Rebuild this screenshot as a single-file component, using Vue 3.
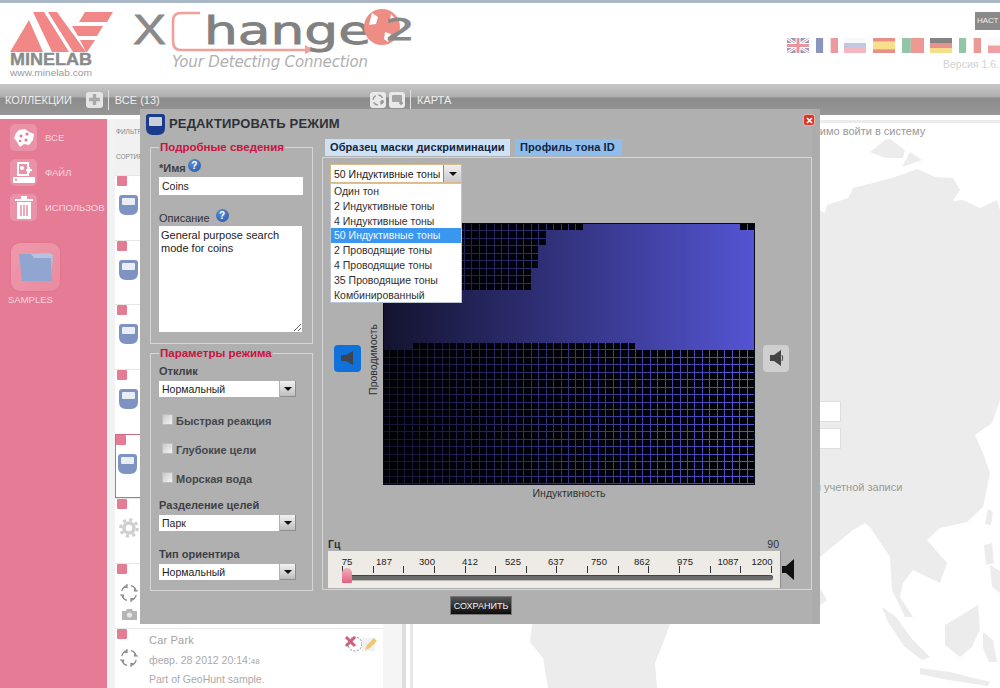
<script setup>
const rows = [
  { kind: 'mode' }, { kind: 'mode' }, { kind: 'mode' }, { kind: 'mode' },
  { kind: 'mode', selected: true }, { kind: 'gear' },
  { kind: 'target', camera: true },
  { kind: 'target', name: 'Car Park', date: 'февр. 28 2012 20:14:', sec: '48', desc: 'Part of GeoHunt sample.' },
]

const flags = [
  { name: 'uk' },
  { dir: 'v', s: [['#3d4f8f', 1], ['#ffffff', 1], ['#e4565f', 1]] },
  { dir: 'h', s: [['#f4f4f8', 1], ['#9aa5d0', 1], ['#e88c96', 1]] },
  { dir: 'h', s: [['#d9453c', 1], ['#f5cb3f', 2], ['#d9453c', 1]] },
  { dir: 'v', s: [['#4fa070', 2], ['#e0574c', 3]] },
  { dir: 'h', s: [['#333333', 1], ['#d84b42', 1], ['#f0c93c', 1]] },
  { dir: 'v', s: [['#4fa070', 1], ['#ffffff', 1], ['#e0574c', 1]] },
  { dir: 'h', s: [['#f6f6f6', 1], ['#e8606a', 1]] },
]
function stripes(f) {
  const total = f.s.reduce((a, b) => a + b[1], 0)
  const len = f.dir === 'v' ? 22 : 15
  let at = 0
  return f.s.map(([c, n]) => {
    const size = (n / total) * len
    const r = f.dir === 'v'
      ? { x: at, y: 0, width: size, height: 15, fill: c }
      : { x: 0, y: at, width: 22, height: size, fill: c }
    at += size
    return r
  })
}

const toneOptions = ['Один тон', '2 Индуктивные тоны', '4 Индуктивные тоны', '50 Индуктивные тоны', '2 Проводящие тоны', '4 Проводящие тоны', '35 Проводящие тоны', 'Комбинированный']
const freq = [75, 187, 300, 412, 525, 637, 750, 862, 975, 1087, 1200]
const ticks = Array.from({ length: 15 }, (_, i) => i)

const COLS = 50, ROWS = 36, CW = 372 / COLS, CH = CW
function isBlack(r, c) {
  if (r === 0) return c < 27 || c >= 48
  if (r <= 2) return c < 22
  if (r <= 5) return c < 21
  if (r <= 8) return c < 20
  if (r <= 15) return false
  if (r === 16) return c >= 4 && c < 34
  return true
}
let d = ''
for (let r = 0; r < ROWS; r++) {
  for (let c = 0; c < COLS; c++) {
    if (isBlack(r, c)) {
      const x = Math.round(c * CW), y = 1 + Math.round(r * CH)
      const w = Math.round((c + 1) * CW) - x - 1, h = 1 + Math.round((r + 1) * CH) - y - 1
      d += `M${x} ${y}h${w}v${h}h${-w}z`
    }
  }
}
const maskPath = d
</script>

<template>
  <div class="page">
    <div class="topline"></div>
    <header class="header">
      <svg class="logo" width="430" height="81" viewBox="0 3 430 81">
        <g fill="#f28787">
          <polygon points="10,52 29,20 43,52" />
          <polygon points="33,12 44,12 69,52 52,52" />
          <polygon points="48,12 57,12 86,52 73,52" />
          <polygon points="85,12 113,12 107,22 79,22" />
          <polygon points="72,26 103,26 97,36 78,36" />
          <polygon points="80,40 95,40 87,52 86,52" />
        </g>
        <text x="10" y="65" class="t-mine" textLength="82" lengthAdjust="spacingAndGlyphs">MINELAB</text>
        <text x="10" y="76" class="t-www" textLength="82" lengthAdjust="spacingAndGlyphs">www.minelab.com</text>
        <text x="133" y="44" class="t-x" textLength="33" lengthAdjust="spacingAndGlyphs">X</text>
        <path d="M200 13H181Q173 13 173 21V41Q173 50 181 50H306" fill="none" stroke="#f0a098" stroke-width="2.6" />
        <polygon points="305,45 314,50 305,54" fill="#f0a098" />
        <text x="204" y="44" class="t-hange" textLength="167" lengthAdjust="spacingAndGlyphs">hange</text>
        <circle cx="382" cy="27" r="18" fill="#ee8d84" />
        <path d="M372 13l6 4-2 7-7 1zM385 32l6 2-3 8-4-3zM391 14l5 6-6 1z" fill="#fff" />
        <text x="385" y="40" class="t-two" textLength="30" lengthAdjust="spacingAndGlyphs">2</text>
        <text x="172" y="67" class="t-tag" textLength="196">Your Detecting Connection</text>
      </svg>
      <div class="head-right">
        <div class="settings">НАСТ</div>
        <div class="flags">
          <svg v-for="(f, i) in flags" :key="i" class="flag" width="22" height="15" viewBox="0 0 22 15">
            <template v-if="f.name === 'uk'">
              <rect width="22" height="15" fill="#4d5a96" />
              <path d="M0 0L22 15M22 0L0 15" stroke="#fff" stroke-width="3" />
              <path d="M0 0L22 15M22 0L0 15" stroke="#d9606c" stroke-width="1" />
              <path d="M11 0V15M0 7.5H22" stroke="#fff" stroke-width="5" />
              <path d="M11 0V15M0 7.5H22" stroke="#d9505c" stroke-width="3" />
            </template>
            <rect v-for="(r, j) in (f.name ? [] : stripes(f))" :key="j" v-bind="r" />
          </svg>
        </div>
        <div class="version">Версия 1.6.</div>
      </div>
    </header>

    <nav class="toolbar">
      <div class="tb-left">
        <span class="tb-text">КОЛЛЕКЦИИ</span>
        <span class="tb-btn plus">
          <svg width="13" height="13" viewBox="0 0 13 13"><path d="M6.5 1v11M1 6.5h11" stroke="#a9a9a9" stroke-width="3.4" /></svg>
        </span>
        <span class="tb-sep"></span>
        <span class="tb-text all">ВСЕ (13)</span>
      </div>
      <span class="tb-btn">
        <svg width="14" height="14" viewBox="0 0 14 14"><circle cx="7" cy="7" r="5" fill="none" stroke="#999" stroke-width="1.5" stroke-dasharray="5 2.8" /><path d="M9 9h4M11 7v4" stroke="#999" stroke-width="1.6" /></svg>
      </span>
      <span class="tb-btn second">
        <svg width="14" height="14" viewBox="0 0 14 14"><rect x="2" y="2" width="10" height="7" rx="1" fill="#a4a4a4" /><path d="M9 10h4M11 8v4" stroke="#999" stroke-width="1.6" /></svg>
      </span>
      <span class="tb-sep map-sep"></span>
      <span class="tb-text all">КАРТА</span>
    </nav>

    <main class="main">
      <aside class="side">
        <div class="side-item">
          <span class="tile">
            <svg width="22" height="20" viewBox="0 0 22 20"><path d="M6 2l6-1 4 3 5 2-1 6-4 5-5-1-4 3-3-5-3-4 2-5z" fill="#fff" /><circle cx="8" cy="8" r="1.6" fill="#e67b96" /><circle cx="14" cy="6" r="1.6" fill="#e67b96" /><circle cx="13" cy="12" r="1.6" fill="#e67b96" /><circle cx="7" cy="13" r="1.2" fill="#e67b96" /></svg>
          </span>
          <span>ВСЕ</span>
        </div>
        <div class="side-item">
          <span class="tile">
            <svg width="24" height="24" viewBox="0 0 24 24"><path d="M6 2h10v12H6z" fill="none" stroke="#fff" stroke-width="2" /><circle cx="10" cy="7" r="2" fill="#fff" /><path d="M14 9h6M17 6v6" stroke="#fff" stroke-width="2" /><rect x="1" y="16" width="22" height="6" rx="1" fill="#fff" /><rect x="3" y="18" width="2" height="1.5" fill="#e67b96" /></svg>
          </span>
          <span>ФАЙЛ</span>
        </div>
        <div class="side-item">
          <span class="tile">
            <svg width="20" height="25" viewBox="0 0 20 25"><path d="M1 4h18v2H1zM7 1h6v3H7z" fill="#fff" /><path d="M3 7h14v17H3z" fill="#fff" /><path d="M7 10v11M10 10v11M13 10v11" stroke="#e67b96" stroke-width="1.3" /></svg>
          </span>
          <span>ИСПОЛЬЗОВ</span>
        </div>
        <div class="folder-tile">
          <svg width="38" height="32" viewBox="0 0 38 32"><path d="M8 3l24-1 4 2-2 25H8z" fill="#b6c3de" /><path d="M2 3h12l3 4h17l1 23H5z" fill="#90a5cf" /></svg>
        </div>
        <div class="folder-name">SAMPLES</div>
      </aside>
      <div class="gutter"></div>

      <section class="list">
        <div class="filters">
          <div class="filter-line">ФИЛЬТР</div>
          <div class="filter-line">СОРТИРОВКА</div>
        </div>
        <article v-for="(r, i) in rows" :key="i" class="row" :class="{ selected: r.selected, last: r.name }">
          <div class="row-left">
            <span class="mark"></span>
            <svg v-if="r.kind === 'mode'" class="row-icon" width="19" height="20" viewBox="0 0 19 20">
              <path d="M3 0h13q3 0 3 3v10q0 7-7 7H7q-7 0-7-7V3q0-3 3-3z" fill="#7f93c2" />
              <rect x="3" y="3" width="13" height="7" rx="1" fill="#e8edf6" />
            </svg>
            <svg v-else-if="r.kind === 'gear'" class="row-icon" width="20" height="20" viewBox="0 0 20 20">
              <circle cx="10" cy="10" r="5" fill="none" stroke="#cfcfcf" stroke-width="3.6" />
              <circle cx="10" cy="10" r="8.3" fill="none" stroke="#cfcfcf" stroke-width="3" stroke-dasharray="3.2 3.3" />
            </svg>
            <svg v-else class="row-icon" width="20" height="20" viewBox="0 0 20 20" fill="none" stroke="#8a8a8a" stroke-width="1.2">
              <path d="M2.8 8A7.5 7.5 0 0 1 8 2.6M12 2.6A7.5 7.5 0 0 1 17.2 8M17.2 12A7.5 7.5 0 0 1 12 17.4M8 17.4A7.5 7.5 0 0 1 2.8 12" />
              <path d="M8 1v3.5l-2.6-.4M12 19v-3.5l2.6.4M1 12h3.5l-.4 2.6M19 8h-3.5l.4-2.6" />
            </svg>
            <svg v-if="r.camera" class="row-camera" width="15" height="11" viewBox="0 0 15 11">
              <path d="M0 2h4l1-2h5l1 2h4v9H0z" fill="#b5b5b5" /><circle cx="7.5" cy="6" r="2.6" fill="#e6e6e6" />
            </svg>
          </div>
          <div v-if="r.name" class="row-text">
            <div class="row-name">{{ r.name }}</div>
            <div class="row-date">{{ r.date }}<small>{{ r.sec }}</small></div>
            <div class="row-desc">{{ r.desc }}</div>
          </div>
          <div v-if="r.name" class="row-actions">
            <svg width="36" height="18" viewBox="0 0 36 18">
              <circle cx="11" cy="9" r="7" fill="none" stroke="#888" stroke-width="1" stroke-dasharray="2 1.5" />
              <path d="M2 2l9 9M11 2l-9 9" stroke="#d0607a" stroke-width="3" />
              <rect x="18" y="3" width="13" height="13" fill="#f1f1f1" />
              <path d="M21 15l2-5 7-7 3 3-7 7z" fill="#edc772" />
            </svg>
          </div>
        </article>
      </section>
      <div class="split-a"></div>
      <div class="split-b"></div>
      <div class="split-c"></div>

      <section class="map">
        <svg class="land" viewBox="413 119 587 569" width="587" height="569">
          <g fill="#ececec">
            <path d="M870 152l15-12 5-1 15 11-2 8-18 0zM902 167l8-15 12 8z" />
            <path d="M700 150L825 213 827 205 848 198 853 188 892 178 917 169 935 177 953 178 960 190 952 202 933 208 943 202 963 200 980 208 997 200 1000 210V400L992 423 975 435 983 453 990 473 983 507 967 522 940 528 927 540 947 563 940 583 913 570 903 583 900 597 913 617 905 617 892 590 890 557 870 527 865 523 853 530 820 557H700z" />
            <path d="M540 590H683L663 643 655 663 657 688H548L543 658 530 642 532 625z" />
            <path d="M818 585l9 15-9 7z" />
            <path d="M882 607l14 10 16 22 18 18-8 3-18-14-16-24z" />
            <path d="M945 625l20-12 13-8 2 24-8 18-12 10-15-12z" />
            <path d="M920 668l30 4 40 10-2 4-40-6-28-6z" />
            <path d="M983 632l10 8 4 22-8 0-6-14zM984 545l8-2 2 20-8 2zM990 565l10 6v22l-8-6z" />
            <path d="M988 509l5 3-2 13-6-1z" />
          </g>
          <path d="M943 541l9-4-1 8-5 5-4-2z" fill="#fff" />
        </svg>
        <div class="stripe"></div>
        <div class="login">
          <p class="note">Необходимо войти в систему</p>
          <div class="box first"></div>
          <div class="box"></div>
          <p class="note register">Для создания учетной записи</p>
        </div>
      </section>
    </main>

    <div class="modal">
      <div class="title">
        <svg width="19" height="21" viewBox="0 0 19 21">
          <path d="M3 0h13q3 0 3 3v11q0 7-7 7H7q-7 0-7-7V3q0-3 3-3z" fill="#1b3c8c" />
          <rect x="3" y="3" width="13" height="9" rx="1" fill="#c9d0da" />
        </svg>
        <h1>РЕДАКТИРОВАТЬ РЕЖИМ</h1>
        <span class="close">
          <svg width="7" height="7" viewBox="0 0 7 7"><path d="M1 1l5 5M6 1l-5 5" stroke="#fff" stroke-width="1.7" /></svg>
        </span>
      </div>
      <div class="body">
        <div class="left">
          <fieldset class="fs details">
            <legend>Подробные сведения</legend>
            <div class="label first-label"><b>*Имя</b><span class="help near">?</span></div>
            <input class="name" value="Coins" />
            <div class="label desc-label"><span class="plain">Описание</span><span class="help">?</span></div>
            <textarea class="desc">General purpose search mode for coins</textarea>
          </fieldset>
          <fieldset class="fs params">
            <legend>Параметры режима</legend>
            <div class="label otklik"><b>Отклик</b></div>
            <div class="sel"><span class="sel-val">Нормальный</span><span class="sel-btn"><i></i></span></div>
            <label class="check c1"><span class="cb"></span>Быстрая реакция</label>
            <label class="check"><span class="cb"></span>Глубокие цели</label>
            <label class="check"><span class="cb"></span>Морская вода</label>
            <div class="label sep-label"><b>Разделение целей</b></div>
            <div class="sel"><span class="sel-val">Парк</span><span class="sel-btn"><i></i></span></div>
            <div class="label type-label"><b>Тип ориентира</b></div>
            <div class="sel"><span class="sel-val">Нормальный</span><span class="sel-btn"><i></i></span></div>
          </fieldset>
        </div>

        <div class="right">
          <div class="tabs">
            <span class="tab active">Образец маски дискриминации</span>
            <span class="tab other">Профиль тона ID</span>
          </div>
          <div class="panel">
            <div class="tone-select">
              <span class="tone-val">50 Индуктивные тоны</span>
              <span class="tone-btn"><i></i></span>
            </div>
            <ul class="tone-list">
              <li v-for="o in toneOptions" :key="o" :class="{ on: o === '50 Индуктивные тоны' }">{{ o }}</li>
            </ul>

            <div class="grid-row">
              <span class="spk blue">
                <svg width="15" height="16" viewBox="0 0 15 16"><path d="M1 5h5l7-4v14l-7-4H1z" fill="#3c4652" /></svg>
              </span>
              <span class="axis-y">Проводимость</span>
              <svg class="mask" width="372" height="262" viewBox="0 0 372 262">
                <defs>
                  <linearGradient id="maskGrad" x1="0" x2="1" y1="0" y2="0">
                    <stop offset="0" stop-color="#13132f" />
                    <stop offset="1" stop-color="#5454d4" />
                  </linearGradient>
                </defs>
                <rect width="372" height="262" fill="url(#maskGrad)" />
                <path :d="maskPath" fill="#000008" shape-rendering="crispEdges" />
                <rect x="0.5" y="0.5" width="371" height="261" fill="none" stroke="#08081a" />
              </svg>
              <span class="spk grey">
                <svg width="15" height="18" viewBox="0 0 15 18"><path d="M1 6h4l7-5v16l-7-5H1z" fill="#444" /><path d="M13 6q1.5 3 0 6" stroke="#444" fill="none" /></svg>
              </span>
            </div>
            <div class="axis-x">Индуктивность</div>
            <div class="hz-row"><span>Гц</span><span>90</span></div>
            <div class="slider-row">
              <div class="slider">
                <div class="freqs"><span v-for="f in freq" :key="f">{{ f }}</span></div>
                <div class="ticks"><i v-for="t in ticks" :key="t"></i></div>
                <div class="track"><span class="thumb"></span></div>
              </div>
              <svg width="12" height="21" viewBox="0 0 12 21"><path d="M0 7h4l8-7v21l-8-7H0z" fill="#111" /></svg>
            </div>
          </div>
          <button class="save">СОХРАНИТЬ</button>
        </div>
      </div>
    </div>
  </div>
</template>

<style scoped>
.page { position: relative; width: 1000px; height: 688px; overflow: hidden; background: #fff; font-family: "Liberation Sans", Arial, sans-serif; display: flex; flex-direction: column; }
.topline { height: 3px; background: #a9b7c6; flex: none; }

.header { height: 81px; flex: none; display: flex; justify-content: space-between; }
.logo { display: block; }
.t-mine { font: bold 16.5px "Liberation Sans", sans-serif; fill: #8b8b8b; stroke: #8b8b8b; stroke-width: .4px; }
.t-www { font: 9.5px "Liberation Sans", sans-serif; fill: #9a9a9a; }
.t-x { font: 42px "Liberation Sans", sans-serif; fill: #8a8a8a; stroke: #8a8a8a; stroke-width: .8px; }
.t-hange { font: 37px "DejaVu Sans", sans-serif; fill: #818181; stroke: #818181; stroke-width: .8px; }
.t-two { font: 30px "DejaVu Sans", sans-serif; fill: #888; stroke: #888; stroke-width: .8px; }
.t-tag { font: italic 15px "DejaVu Sans", sans-serif; fill: #b0b0b0; }
.head-right { width: 213px; overflow: hidden; flex: none; }
.settings { margin: 9px 0 0 188px; width: 25px; height: 18px; background: #8a8a8a; color: #eee; font-size: 8px; line-height: 18px; padding-left: 2px; box-sizing: border-box; white-space: nowrap; }
.flags { display: flex; gap: 6.7px; margin-top: 8px; width: 240px; }
.flag { flex: none; opacity: .6; display: block; }
.version { margin: 5px 0 0 156px; width: 57px; font-size: 10.5px; color: #d2d2d2; white-space: nowrap; }

.toolbar { height: 31px; flex: none; display: flex; align-items: center; background: linear-gradient(#c8c8c8 0, #adadad 13px, #8b8b8b 14px, #979797 100%); color: #eee; }
.tb-left { width: 370px; flex: none; display: flex; align-items: center; padding-left: 5px; box-sizing: border-box; }
.tb-text { font-size: 11px; }
.tb-btn { width: 16px; height: 16px; border-radius: 3px; background: #e9e9e9; display: flex; align-items: center; justify-content: center; flex: none; }
.plus { margin-left: 14px; width: 17px; background: #e4e4e4; }
.second { margin-left: 3px; }
.tb-sep { width: 1px; height: 20px; background: #e0e0e0; margin-left: 5px; flex: none; }
.all { margin-left: 6px; }
.map-sep { margin-left: 5px; }

.main { flex: 1; display: flex; min-height: 0; padding-top: 4px; }
.side { width: 107px; flex: none; background: #e67b96; color: #f8d5de; font-size: 9.5px; padding: 1px 0 0 10px; box-sizing: border-box; overflow: hidden; }
.side-item { display: flex; align-items: center; gap: 8px; height: 35px; white-space: nowrap; }
.tile { width: 27px; height: 27px; border-radius: 5px; background: #ea92a8; display: flex; align-items: center; justify-content: center; flex: none; }
.folder-tile { width: 49px; height: 48px; margin: 18px 0 0 1px; border-radius: 9px; background: linear-gradient(135deg, #ee9aab, #e98b9e); display: flex; align-items: center; justify-content: center; box-shadow: 0 0 2px #d96a86; }
.folder-name { margin: 3px 0 0 -2px; font-size: 9.5px; }
.gutter { width: 8px; flex: none; background: #f2f2f2; }

.list { width: 268px; flex: none; display: flex; flex-direction: column; overflow: hidden; }
.filters { height: 56px; flex: none; background: #f1f1f1; padding: 9px 0 0 1px; box-sizing: border-box; }
.filter-line { font-size: 6.5px; color: #888; height: 25px; white-space: nowrap; }
.row { height: 64.7px; flex: none; box-sizing: border-box; border-top: 1px solid #e6e6e6; display: flex; padding-left: 2px; background: #fff; }
.row.selected { border: 1px solid #cf6a84; padding-left: 0; }
.row.last { height: 70px; }
.row-left { width: 32px; flex: none; display: flex; flex-direction: column; align-items: flex-start; }
.mark { width: 10px; height: 10px; background: #e67b96; border-radius: 1px; flex: none; }
.row-icon { margin: 9px 0 0 2px; display: block; flex: none; }
.row-camera { margin: 6px 0 0 5px; display: block; flex: none; }
.row-text { flex: none; color: #aaa; font-size: 10.5px; }
.row-name { font-size: 11px; margin-top: 4px; height: 19px; line-height: 14px; letter-spacing: .2px; color: #a2a2a2; }
.row-date { height: 19px; line-height: 19px; margin-top: -1px; }
.row-date small { font-size: 8px; }
.row-desc { line-height: 19px; }
.row-actions { margin-left: auto; padding: 6px 3px 0 0; }

.split-a { width: 19px; flex: none; background: #f5f5f5; }
.split-b { width: 4px; flex: none; background: #dedede; }
.split-c { width: 4px; flex: none; background: #fff; }

.map { position: relative; flex: 1; min-width: 0; border-left: 3px solid #e8e8e8; overflow: hidden; background: #fff; }
.land { position: absolute; left: 0; top: 0; display: block; }
.stripe { position: relative; height: 3px; background: #ececec; margin-top: 1px; }
.login { position: relative; padding-left: 363px; color: #999; font-size: 11px; }
.note { margin: 0; line-height: 13px; white-space: nowrap; }
.login > .note:first-child { padding-top: 2px; }
.box { width: 63px; height: 19px; background: #fff; border: 1px solid #dedede; box-sizing: content-box; margin-top: 6px; }
.box.first { margin-top: 263px; }
.register { margin-top: 32px; margin-left: -25px; }

.modal { position: absolute; left: 140px; top: 109px; width: 680px; height: 515px; background: #b0b0b0; box-sizing: border-box; display: flex; flex-direction: column; box-shadow: inset -8px 0 0 #acacac; }
.title { height: 32px; flex: none; display: flex; align-items: flex-start; padding: 5px 0 0 6px; box-sizing: border-box; position: relative; }
.title h1 { margin: 2px 0 0 4px; font-size: 13px; font-weight: bold; color: #2e3238; letter-spacing: .15px; }
.close { margin-left: auto; margin-right: 6px; margin-top: 1px; width: 10px; height: 10px; border-radius: 2px; background: #d8362a; display: flex; align-items: center; justify-content: center; box-shadow: 0 0 0 1px #e9b0a8; }
.body { flex: 1; display: flex; padding-left: 10px; min-height: 0; }
.left { width: 163px; flex: none; }
.fs { margin: 0; padding: 0 8px; border: 1px solid #d6d6d6; box-sizing: border-box; min-width: 0; }
.fs legend { padding: 0 1px; font-size: 11.5px; line-height: 13px; font-weight: bold; color: #c8143f; }
.details { height: 203px; }
.params { height: 244px; margin-top: 3px; }
.label { display: flex; align-items: center; font-size: 11px; color: #33363c; height: 13px; }
.label .plain { color: #2f3236; }
.label b { font-weight: bold; color: #3c3f46; }
.first-label { margin-top: 7px; }
.desc-label { margin-top: 16px; }
.help { width: 13px; height: 13px; border-radius: 50%; background: radial-gradient(circle at 40% 30%, #5a8fd8, #1f55a8); color: #fff; font: bold 10px/13px "Liberation Sans", sans-serif; text-align: center; margin-left: 6px; margin-top: -5px; }
.help.near { margin-left: 2px; }
.name { display: block; width: 144px; height: 18px; box-sizing: border-box; border: 0; background: #fff; padding: 0 3px; margin: 3px 0 0 0; font: 10.5px "Liberation Sans", sans-serif; color: #222; outline: 0; }
.desc { display: block; width: 143px; height: 106px; box-sizing: border-box; border: 0; background: #fff; padding: 3px 2px; margin: 2px 0 0 0; font: 11px/13px "Liberation Sans", sans-serif; color: #222; outline: 0; }
.otklik { margin-top: 4px; }
.sel { display: flex; gap: 1px; margin-top: 4px; height: 16px; }
.sel-val { width: 120px; background: #fff; font-size: 10.5px; line-height: 16px; padding-left: 3px; box-sizing: border-box; color: #222; }
.sel-btn { width: 16px; background: linear-gradient(#f3f3f3, #bdbdbd); border: 1px solid #8e8e8e; border-width: 0 1px 1px 0; box-sizing: border-box; display: flex; align-items: center; justify-content: center; }
.sel-btn i, .tone-btn i { width: 0; height: 0; border: 4px solid transparent; border-top: 4px solid #111; border-bottom: 0; }
.check { display: flex; align-items: center; height: 12px; margin: 17px 0 0 3px; font-size: 11px; font-weight: bold; color: #44474e; white-space: nowrap; }
.check.c1 { margin-top: 18px; }
.cb { width: 9px; height: 9px; margin-right: 3px; background: linear-gradient(135deg, #c9c9c9, #f5f5f5); border: 1px solid #bdbdbd; box-sizing: content-box; flex: none; margin-top: -3px; }
.sep-label { margin-top: 13px; }
.type-label { margin-top: 16px; }

.right { width: 490px; flex: none; margin-left: 9px; margin-top: -2px; }
.tabs { display: flex; gap: 5px; height: 18px; padding-left: 3px; box-sizing: border-box; }
.tab { height: 17px; line-height: 17px; font-size: 11px; font-weight: bold; color: #10243e; padding: 0 5px; white-space: nowrap; letter-spacing: .1px; box-sizing: border-box; }
.tab.active { width: 185px; background: #cfe1f4; }
.tab.other { background: #90bcec; width: 107px; }
.panel { position: relative; height: 433px; box-sizing: border-box; border: 1px solid #d6d6d6; padding: 7px 7px 0; }
.tone-select { display: flex; align-items: center; width: 130px; height: 17px; margin-left: 1px; background: #fff; box-shadow: 0 0 0 1px #d8b98a; font-size: 10.5px; color: #222; white-space: nowrap; }
.tone-val { flex: 1; padding-left: 3px; }
.tone-btn { width: 18px; height: 17px; background: linear-gradient(#f0f0f0, #c9c9c9); border-left: 1px solid #888; box-sizing: border-box; display: flex; align-items: center; justify-content: center; flex: none; }
.tone-list { position: absolute; left: 8px; top: 26px; width: 130px; margin: 0; padding: 0; list-style: none; background: #fff; z-index: 2; box-shadow: 0 0 0 1px #bcc6d2; font-size: 10.5px; color: #303030; }
.tone-list li { height: 14.8px; line-height: 15px; padding-left: 3px; white-space: nowrap; }
.tone-list li.on { background: #3b96ef; color: #eef6ff; }
.grid-row { display: flex; align-items: center; margin-top: 41px; height: 262px; padding-left: 4px; }
.spk { width: 27px; height: 27px; border-radius: 4px; display: flex; align-items: center; justify-content: center; flex: none; margin-top: 8px; }
.spk.blue { background: #0f72da; }
.spk.grey { background: #cfcfcf; margin-left: 8px; width: 26px; }
.axis-y { writing-mode: vertical-rl; transform: rotate(180deg); font-size: 10.5px; width: 12px; line-height: 12px; margin: 10px 4px 0 6px; color: #303236; white-space: nowrap; flex: none; }
.mask { display: block; flex: none; }
.axis-x { width: 372px; margin: 1px 0 0 53px; text-align: center; font-size: 10.5px; line-height: 14px; color: #303236; }
.hz-row { display: flex; justify-content: space-between; width: 451px; margin: 38px 0 0 -2px; height: 13px; line-height: 13px; font-size: 10.5px; color: #303236; }
.hz-row span:first-child { font-weight: bold; }
.slider-row { display: flex; align-items: center; margin-left: -2px; gap: 1px; }
.slider { position: relative; width: 453px; height: 37px; flex: none; background: #eeebe6; box-sizing: border-box; padding: 5px 0 0 3.5px; border-right: 1px solid #8e8e8e; }
.freqs { display: grid; grid-template-columns: 31px repeat(9, 43px) 25px; font-size: 9.5px; line-height: 12px; color: #222; text-align: center; }
.ticks { display: flex; justify-content: space-between; width: 430px; margin: -2px 0 0 10.5px; height: 8px; }
.ticks i { width: 1px; height: 7px; background: #333; }
.track { position: relative; width: 431px; height: 5px; margin: 1px 0 0 10.5px; background: #6c6c6c; border-radius: 3px; box-shadow: inset 0 1px 0 #444, 0 1px 0 #bbb; }
.thumb { position: absolute; left: 0; top: -7px; width: 10px; height: 15px; border-radius: 5px 5px 1px 1px; background: linear-gradient(#efb4c0, #e35f7f); }
.save { display: block; width: 62px; height: 19px; margin: 6px 0 0 128px; padding: 0; border: 1px solid #777; background: linear-gradient(#555, #0c0c0c); color: #f0f0f0; font: 9px "Liberation Sans", sans-serif; white-space: nowrap; }
</style>

<style>
html, body { margin: 0; overflow: hidden; }
</style>
